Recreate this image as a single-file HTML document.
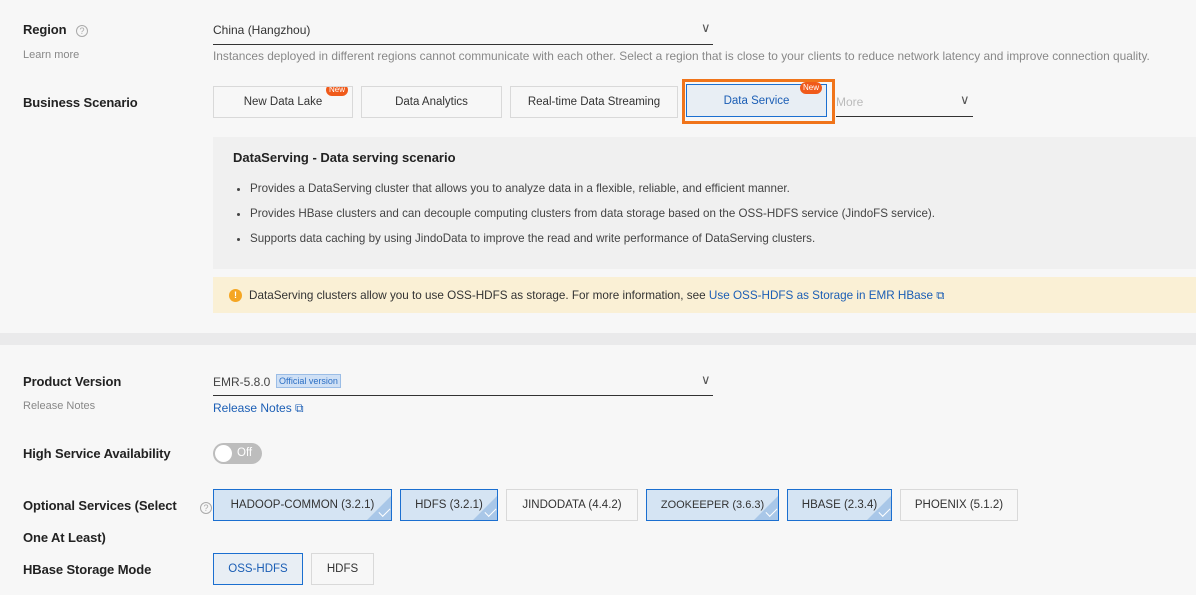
<!DOCTYPE html>
<html><head><meta charset="utf-8"><style>
*{margin:0;padding:0;box-sizing:border-box}
body{width:1196px;height:595px;background:#f7f7f7;font-family:"Liberation Sans",sans-serif;position:relative;overflow:hidden;color:#333}
.a{position:absolute;white-space:nowrap}
.lbl{font-size:13px;color:#222;font-weight:bold;letter-spacing:-0.1px}
.sub{font-size:11px;color:#888}
.btn{position:absolute;height:32px;border:1px solid #d9d9d9;background:#f7f7f7;font-size:11.5px;color:#333;display:flex;align-items:center;justify-content:center;overflow:hidden}
.sel{border-color:#1b6fd0;background:#d5e4f3}
.new{position:absolute;top:-3px;right:4px;background:#f05a1a;color:#fff;font-size:8px;border-radius:6px;padding:1px 3px;line-height:10px}
.chk{position:absolute;right:0;bottom:0;width:0;height:0;border-left:24px solid transparent;border-bottom:24px solid #a9c7e8}
.chk:after{content:"";position:absolute;left:-12px;top:12px;width:10px;height:5px;border-left:1px solid #fff;border-bottom:1px solid #fff;transform:rotate(-45deg)}
.q{display:inline-block;width:12px;height:12px;border:1px solid #aaa;border-radius:50%;font-size:9px;color:#aaa;text-align:center;line-height:10px;font-weight:normal}
li{font-size:11.6px;color:#444;margin-left:17px;margin-bottom:12px}
</style></head><body>
<div class="a lbl" style="left:23px;top:22px">Region <span class="q" style="margin-left:6px">?</span></div>
<div class="a sub" style="left:23px;top:49px">Learn more</div>
<div class="a" style="left:213px;top:23px;font-size:12px;color:#333">China (Hangzhou)</div>
<div class="a" style="left:701px;top:20px;font-size:13px;color:#555">&#8744;</div>
<div class="a" style="left:213px;top:44px;width:500px;border-top:1px solid #333"></div>
<div class="a sub" style="left:213px;top:49px;font-size:11.9px">Instances deployed in different regions cannot communicate with each other. Select a region that is close to your clients to reduce network latency and improve connection quality.</div>

<div class="a lbl" style="left:23px;top:95px">Business Scenario</div>
<div class="btn" style="left:213px;top:86px;width:140px">New Data Lake<span class="new">New</span></div>
<div class="btn" style="left:361px;top:86px;width:141px">Data Analytics</div>
<div class="btn" style="left:510px;top:86px;width:168px">Real-time Data Streaming</div>
<div class="a" style="left:682px;top:79px;width:153px;height:45px;border:3px solid #f0741a"></div>
<div class="btn" style="left:686px;top:84px;width:141px;height:33px;border-color:#1b6fd0;background:#e8eef4;color:#1b5eb5;overflow:visible">Data Service<span class="new">New</span></div>
<div class="a" style="left:836px;top:95px;font-size:12px;color:#bbb">More</div>
<div class="a" style="left:960px;top:92px;font-size:13px;color:#555">&#8744;</div>
<div class="a" style="left:836px;top:116px;width:137px;border-top:1px solid #333"></div>

<div class="a" style="left:213px;top:137px;width:983px;height:132px;background:#f0f0f0"></div>
<div class="a" style="left:233px;top:150px;font-size:13px;font-weight:bold;color:#222">DataServing - Data serving scenario</div>
<ul class="a" style="left:233px;top:182px">
<li>Provides a DataServing cluster that allows you to analyze data in a flexible, reliable, and efficient manner.</li>
<li>Provides HBase clusters and can decouple computing clusters from data storage based on the OSS-HDFS service (JindoFS service).</li>
<li>Supports data caching by using JindoData to improve the read and write performance of DataServing clusters.</li>
</ul>
<div class="a" style="left:213px;top:277px;width:983px;height:36px;background:#faf0d5"></div>
<div class="a" style="left:229px;top:289px;width:13px;height:13px;border-radius:50%;background:#f5a623;color:#fff;font-size:9px;font-weight:bold;text-align:center;line-height:13px">!</div>
<div class="a" style="left:249px;top:289px;font-size:11.7px;color:#333">DataServing clusters allow you to use OSS-HDFS as storage. For more information, see <span style="color:#1b5eb5">Use OSS-HDFS as Storage in EMR HBase &#10697;</span></div>

<div class="a" style="left:0;top:333px;width:1196px;height:12px;background:#eaeaeb"></div>

<div class="a lbl" style="left:23px;top:374px">Product Version</div>
<div class="a sub" style="left:23px;top:400px">Release Notes</div>
<div class="a" style="left:213px;top:375px;font-size:12px;color:#444">EMR-5.8.0</div>
<div class="a" style="left:276px;top:374px;font-size:9px;color:#2c6fc4;background:#cfe0f5;border:1px solid #9bbde6;padding:1px 2px">Official version</div>
<div class="a" style="left:701px;top:372px;font-size:13px;color:#555">&#8744;</div>
<div class="a" style="left:213px;top:395px;width:500px;border-top:1px solid #333"></div>
<div class="a" style="left:213px;top:401px;font-size:12px;color:#1b5eb5">Release Notes &#10697;</div>

<div class="a lbl" style="left:23px;top:446px">High Service Availability</div>
<div class="a" style="left:213px;top:443px;width:49px;height:21px;border-radius:11px;background:#bdbdbd"></div>
<div class="a" style="left:215px;top:445px;width:17px;height:17px;border-radius:50%;background:#fff"></div>
<div class="a" style="left:237px;top:447px;font-size:11.5px;color:#fff">Off</div>

<div class="a lbl" style="left:23px;top:498px">Optional Services (Select</div>
<div class="a lbl" style="left:23px;top:530px">One At Least)</div>
<div class="a" style="left:200px;top:498px"><span class="q">?</span></div>
<div class="btn sel" style="left:213px;top:489px;width:179px">HADOOP-COMMON (3.2.1)<span class="chk"></span></div>
<div class="btn sel" style="left:400px;top:489px;width:98px">HDFS (3.2.1)<span class="chk"></span></div>
<div class="btn" style="left:506px;top:489px;width:132px">JINDODATA (4.4.2)</div>
<div class="btn sel" style="left:646px;top:489px;width:133px;font-size:11px">ZOOKEEPER (3.6.3)<span class="chk"></span></div>
<div class="btn sel" style="left:787px;top:489px;width:105px">HBASE (2.3.4)<span class="chk"></span></div>
<div class="btn" style="left:900px;top:489px;width:118px">PHOENIX (5.1.2)</div>

<div class="a lbl" style="left:23px;top:562px">HBase Storage Mode</div>
<div class="btn" style="left:213px;top:553px;width:90px;border-color:#1b6fd0;background:#e8eef4;color:#1b5eb5">OSS-HDFS</div>
<div class="btn" style="left:311px;top:553px;width:63px">HDFS</div>
</body></html>
